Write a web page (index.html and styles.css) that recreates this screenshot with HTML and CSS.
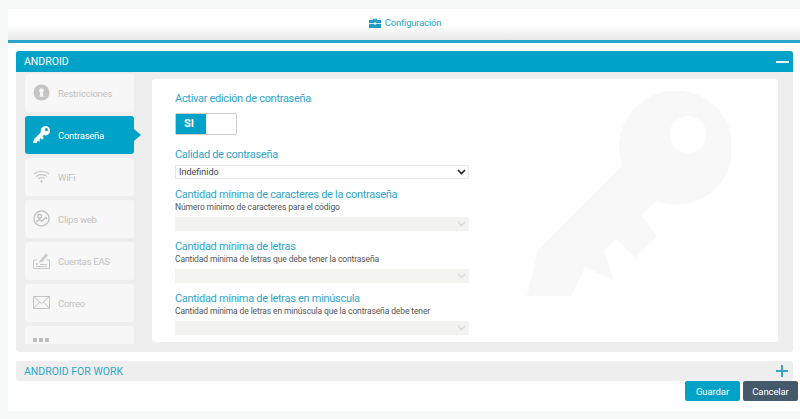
FILE: index.html
```html
<!DOCTYPE html>
<html lang="es">
<head>
<meta charset="utf-8">
<title>Configuración</title>
<link rel="stylesheet" href="styles.css">
</head>
<body>
<svg class="defs" width="0" height="0" aria-hidden="true">
  <symbol id="key" viewBox="527 91 204 205">
    <path fill-rule="evenodd" d="M622 166 L538 250 L527 296 L571 296 L585 267 L614 281 L604 250 L617 239 L635 258 L657 236 L641 215 L656 201 A57 57 0 1 0 622 166 Z M688 116 A18.500 18.500 0 1 0 688 153 A18.500 18.500 0 1 0 688 116 Z"/>
  </symbol>
</svg>
<div class="page">
  <header class="topbar">
    <svg class="case" viewBox="0 0 12 10"><path d="M4 2V.8h4V2h-1V1.700H5V2z"/><path d="M0 2h12v3H7v-.6H5V5H0zM0 5.800h5v.7h2v-.7h5V10H0z"/></svg>
    <span class="topbar-title">Configuración</span>
  </header>
  <section class="panel">
    <div class="panel-head">
      <span>ANDROID</span>
      <span class="minus"></span>
    </div>
    <div class="panel-body">
      <nav class="nav">
        <a class="nav-item">
          <svg class="nav-icon" viewBox="0 0 17 18"><path fill-rule="evenodd" fill="#c4c4c4" d="M8.500.5a8.500 8.500 0 1 0 0 17 8.500 8.500 0 0 0 0-17zM8.500 4.500a2.500 2.500 0 0 1 1.300 4.600l.7 4.400h-4l.7-4.400A2.500 2.500 0 0 1 8.500 4.500z"/></svg>
          <span>Restricciones</span>
        </a>
        <a class="nav-item active">
          <svg class="nav-icon" viewBox="0 0 17 17"><use href="#key" fill="#fff"/></svg>
          <span>Contraseña</span>
        </a>
        <a class="nav-item">
          <svg class="nav-icon" viewBox="0 0 17 14" fill="none" stroke="#c8c8c8" stroke-width="1.300"><path d="M1 4.500c4-3.500 11-3.500 15 0M3 7c3-2.500 8-2.500 11 0M5.200 9.300c2-1.400 4.600-1.400 6.600 0"/><path d="M8.500 10.500l-1.500 1.300 1.500 1.700 1.500-1.700z" fill="#c8c8c8" stroke="none"/></svg>
          <span>WiFi</span>
        </a>
        <a class="nav-item">
          <svg class="nav-icon" viewBox="0 0 18 18" fill="none" stroke="#c4c4c4" stroke-width="1.500"><circle cx="9" cy="9" r="8"/><circle cx="7" cy="6.500" r="2"/><path d="M3.500 12.500l3.500-2.500 2.500 2 4-4 1.500 1.500"/></svg>
          <span>Clips web</span>
        </a>
        <a class="nav-item">
          <svg class="nav-icon" viewBox="0 0 17 17" fill="none" stroke="#c8c8c8"><path d="M4 8H.5v8.500h16V8h-3"/><path d="M7 8.500L13 1.500l2 1.700-6 6.800-3 .7z" fill="#c8c8c8" stroke="none"/><path d="M3 11l2 1-2 1M7 12.500h7M3 14.500h11"/></svg>
          <span>Cuentas EAS</span>
        </a>
        <a class="nav-item">
          <svg class="nav-icon" viewBox="0 0 17 13" fill="none" stroke="#c4c4c4"><path d="M.5.500h16v12H.5zM.5.500l8 7 8-7M.5 12.500l6-6.500M16.500 12.500l-6-6.500"/></svg>
          <span>Correo</span>
        </a>
        <a class="nav-item apps">
          <span class="squares"><i></i><i></i><i></i></span>
          <span class="apps-label">Aplicaciones</span>
        </a>
      </nav>
      <div class="card">
        <svg class="watermark"><use href="#key" fill="#f8f8f8"/></svg>
        <div class="form">
          <h3 class="label first">Activar edición de contraseña</h3>
          <div class="toggle"><span class="toggle-on">SI</span></div>
          <h3 class="label quality">Calidad de contraseña</h3>
          <select class="select"><option>Indefinido</option></select>
          <h3 class="label">Cantidad mínima de caracteres de la contraseña</h3>
          <p class="hint">Número mínimo de caracteres para el código</p>
          <select class="select" disabled><option></option></select>
          <h3 class="label">Cantidad mínima de letras</h3>
          <p class="hint">Cantidad mínima de letras que debe tener la contraseña</p>
          <select class="select" disabled><option></option></select>
          <h3 class="label">Cantidad mínima de letras en minúscula</h3>
          <p class="hint">Cantidad mínima de letras en minúscula que la contraseña debe tener</p>
          <select class="select" disabled><option></option></select>
        </div>
      </div>
    </div>
  </section>
  <section class="panel-closed">
    <span>ANDROID FOR WORK</span>
    <svg class="plus" viewBox="0 0 12 12"><path d="M5 0h2v5h5v2H7v5H5V7H0V5h5z"/></svg>
  </section>
  <div class="actions">
    <button class="btn save">Guardar</button>
    <button class="btn cancel">Cancelar</button>
  </div>
</div>
</body>
</html>
```
FILE: styles.css
```css
* { box-sizing: border-box; }
html, body { margin: 0; height: 100%; }
body {
  background: #f7f8f8;
  padding: 9px 0 0 8px;
  overflow: hidden;
  font-family: Roboto, sans-serif;
}
.defs { display: block; height: 0; }
.page {
  background: #fff;
  height: 402px;
  display: flex;
  flex-direction: column;
}
.topbar {
  height: 34px;
  flex: none;
  border-bottom: 3px solid #2aa5c9;
  background: linear-gradient(#fff 0%, #fff 50%, #e9e9e9 100%);
  display: flex;
  align-items: center;
  justify-content: center;
  gap: 4px;
  padding: 0 0 4px 2px;
}
.case { width: 12px; height: 10px; fill: #1d9cc4; }
.topbar-title { font-size: 9.500px; letter-spacing: -.2px; color: #2aa5c9; }
.panel { margin: 8px 7px 0 8px; flex: none; }
.panel-head {
  height: 21px;
  background: #00a2c7;
  border-radius: 3px 3px 0 0;
  color: #fff;
  font-size: 10.500px;
  display: flex;
  align-items: center;
  justify-content: space-between;
  padding: 0 4px 0 8px;
}
.minus { width: 13px; height: 2px; background: #e6f6fa; }
.panel-body {
  height: 280px;
  background: #eee;
  border-radius: 0 0 3px 3px;
  display: flex;
  align-items: flex-start;
  padding: 2px 15px 0 9px;
}
.nav {
  width: 116px;
  height: 270px;
  flex: none;
  overflow: hidden;
  display: flex;
  flex-direction: column;
  gap: 4.500px;
  margin-right: 11px;
}
.nav-item {
  width: 109px;
  height: 37.500px;
  flex: none;
  background: #f7f7f7;
  border-radius: 3px;
  color: #c2c2c2;
  font-size: 9.500px;
  letter-spacing: -.25px;
  display: flex;
  align-items: center;
  gap: 8px;
  padding-left: 8px;
  position: relative;
}
.nav-item span { position: relative; top: 1px; }
.nav-icon { width: 17px; height: 17px; flex: none; }
.nav-item.active { background: #00a2c7; color: #fff; }
.nav-item.active::after {
  content: "";
  position: absolute;
  left: 100%;
  top: 13px;
  border-left: 7px solid #00a2c7;
  border-top: 6px solid transparent;
  border-bottom: 6px solid transparent;
}
.apps { align-items: flex-start; padding-top: 12px; }
.nav-item .squares { top: 0; display: flex; gap: 2px; width: 17px; height: 4px; }
.squares i { width: 4px; height: 4px; background: #bdbdbd; }
.nav-item .apps-label { top: 5px; }
.card {
  flex: 1;
  height: 263px;
  margin-top: 5px;
  background: #fff;
  border-radius: 3px;
  overflow: hidden;
  position: relative;
  padding: 0 23px;
}
.watermark {
  position: absolute;
  left: 375px;
  top: 12px;
  width: 204px;
  height: 205px;
}
.form { position: relative; width: 294px; }
.label {
  margin: 0;
  font-size: 11px;
  letter-spacing: -.3px;
  font-weight: 400;
  line-height: 13px;
  color: #2ea6cb;
}
.first { padding-top: 13px; }
.quality { margin-top: 13px; }
.hint {
  margin: 0 0 4px;
  font-size: 8.500px;
  line-height: 12px;
  letter-spacing: -.12px;
  color: #555;
}
.toggle {
  width: 62px;
  height: 22px;
  margin-top: 8px;
  border: 1px solid #ccc;
  border-radius: 2px;
  background: #fff;
}
.toggle-on {
  display: block;
  width: 30px;
  height: 20px;
  background: #00a2c7;
  color: #fff;
  font-size: 11px;
  font-weight: 700;
  line-height: 20px;
  padding-left: 8px;
}
.select {
  display: block;
  appearance: none;
  width: 294px;
  height: 14px;
  margin: 4px 0 9px;
  padding: 0 0 0 3px;
  border: 1px solid #e8e8e8;
  border-radius: 0;
  background: #fff url("data:image/svg+xml,%3Csvg xmlns='http://www.w3.org/2000/svg' width='9' height='6'%3E%3Cpath d='M1 1l3.500 3.500L8 1' fill='none' stroke='%23222' stroke-width='1.600'/%3E%3C/svg%3E") no-repeat right 2px center;
  font-family: inherit;
  font-size: 9px;
  color: #444;
}
.hint + .select { margin-top: 0; }
.select:disabled {
  background-color: #eeeeea;
  background-image: url("data:image/svg+xml,%3Csvg xmlns='http://www.w3.org/2000/svg' width='9' height='6'%3E%3Cpath d='M1 1l3.500 3.500L8 1' fill='none' stroke='%23c8c8c4' stroke-width='1.300'/%3E%3C/svg%3E");
  border-color: #eeeeea;
}
.panel-closed {
  margin: 9px 7px 0 8px;
  height: 20px;
  flex: none;
  background: #eee;
  border-radius: 3px;
  color: #2ea6cb;
  font-size: 10.500px;
  display: flex;
  align-items: center;
  justify-content: space-between;
  padding: 0 5px 0 8px;
}
.plus { width: 12px; height: 12px; fill: #2ea6cb; }
.actions {
  display: flex;
  justify-content: flex-end;
  gap: 3px;
  padding-right: 2px;
}
.btn {
  width: 55px;
  height: 20px;
  padding: 0;
  border: 0;
  border-radius: 2px;
  color: #fff;
  font-family: inherit;
  font-size: 9.500px;
  letter-spacing: -.1px;
}
.save { background: #00a2c7; }
.cancel { background: #44596a; }
```
